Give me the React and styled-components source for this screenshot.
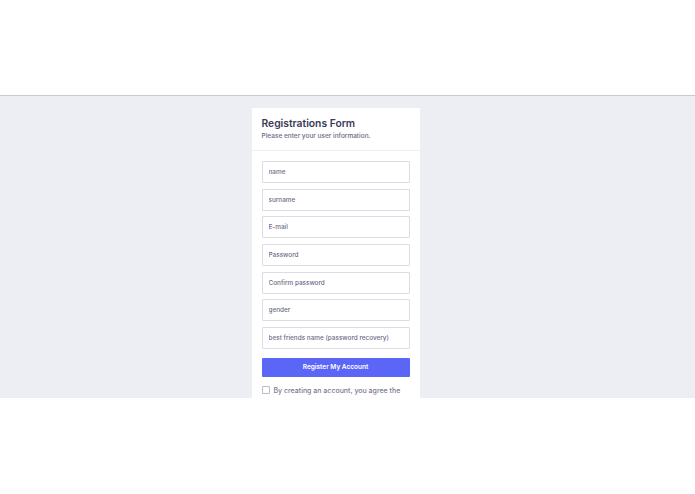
import React from "react";
import styled, { createGlobalStyle } from "styled-components";

const GlobalStyle = createGlobalStyle`
  html, body {
    margin: 0;
    padding: 0;
    background: #ffffff;
    font-family: "Inter", "Liberation Sans", sans-serif;
  }
  * {
    box-sizing: border-box;
  }
`;

const fields = [
  "name",
  "surname",
  "E-mail",
  "Password",
  "Confirm password",
  "gender",
  "best friends name (password recovery)"
];

const Styled = {
  Page: styled.div`
    display: flex;
    flex-direction: column;
    width: 100%;
    height: 494px;
  `,

  TopBar: styled.header`
    height: 96px;
    background: #ffffff;
    border-bottom: 1px solid #c9c9cf;
  `,

  Main: styled.main`
    height: 302px;
    overflow: hidden;
    background: #edeef3;
    display: flex;
    justify-content: center;
    padding-top: 12px;
  `,

  Card: styled.div`
    width: 168px;
    margin-left: -24px;
    background: #ffffff;
    align-self: flex-start;
  `,

  CardHead: styled.div`
    padding: 9px 10px 9px;
    border-bottom: 1px solid #eeeff3;
  `,

  Title: styled.h1`
    margin: 0;
    font-size: 10.3px;
    line-height: 13px;
    font-weight: 600;
    color: #3b3b58;
  `,

  Subtitle: styled.p`
    margin: 2px 0 0;
    font-size: 6.5px;
    line-height: 9px;
    font-weight: 500;
    color: #6a6a84;
  `,

  Form: styled.form`
    display: flex;
    flex-direction: column;
    gap: 5.7px;
    padding: 10px 10px 20px;
  `,

  Input: styled.input`
    height: 22px;
    width: 100%;
    margin: 0;
    padding: 0 6px;
    border: 1px solid #dcdde4;
    border-radius: 1px;
    font-family: inherit;
    font-size: 6.4px;
    font-weight: 500;
    color: #3b3b58;
    background: #ffffff;
    outline: none;

    &::placeholder {
      color: #6c6c84;
    }
  `,

  Button: styled.button`
    margin-top: 3px;
    height: 19px;
    width: 100%;
    border: none;
    border-radius: 1px;
    background: #5b66f6;
    color: #ffffff;
    font-family: inherit;
    font-size: 6.5px;
    font-weight: 600;
    cursor: pointer;
  `,

  Agree: styled.label`
    display: flex;
    align-items: center;
    gap: 4px;
    margin-top: 3px;
    font-size: 7px;
    font-weight: 500;
    color: #7a7a90;
    white-space: nowrap;
  `,

  Check: styled.span`
    flex: none;
    width: 8px;
    height: 8px;
    border: 1px solid #b9bac4;
    border-radius: 1px;
    background: #ffffff;
  `
};

function App() {
  return (
    <>
      <GlobalStyle />
      <Styled.Page>
        <Styled.TopBar />
        <Styled.Main>
          <Styled.Card>
            <Styled.CardHead>
              <Styled.Title>Registrations Form</Styled.Title>
              <Styled.Subtitle>Please enter your user information.</Styled.Subtitle>
            </Styled.CardHead>
            <Styled.Form onSubmit={e => e.preventDefault()}>
              {fields.map(item => (
                <Styled.Input key={item} placeholder={item} />
              ))}
              <Styled.Button type="submit">Register My Account</Styled.Button>
              <Styled.Agree>
                <Styled.Check />
                By creating an account, you agree the
              </Styled.Agree>
            </Styled.Form>
          </Styled.Card>
        </Styled.Main>
      </Styled.Page>
    </>
  );
}

export default App;
